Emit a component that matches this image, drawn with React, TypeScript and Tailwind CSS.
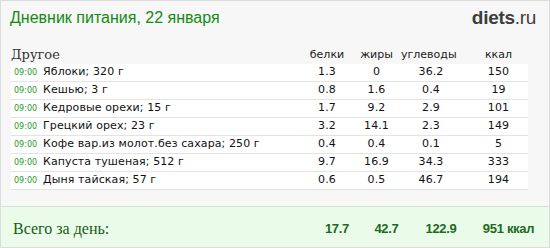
const rows = [
  { time: '09:00', name: 'Яблоки; 320 г', p: '1.3', f: '0', c: '36.2', k: '150' },
  { time: '09:00', name: 'Кешью; 3 г', p: '0.8', f: '1.6', c: '0.4', k: '19' },
  { time: '09:00', name: 'Кедровые орехи; 15 г', p: '1.7', f: '9.2', c: '2.9', k: '101' },
  { time: '09:00', name: 'Грецкий орех; 23 г', p: '3.2', f: '14.1', c: '2.3', k: '149' },
  { time: '09:00', name: 'Кофе вар.из молот.без сахара; 250 г', p: '0.4', f: '0.4', c: '0.1', k: '5' },
  { time: '09:00', name: 'Капуста тушеная; 512 г', p: '9.7', f: '16.9', c: '34.3', k: '333' },
  { time: '09:00', name: 'Дыня тайская; 57 г', p: '0.6', f: '0.5', c: '46.7', k: '194' },
];

const cols = 'grid grid-cols-[1fr_50px_49px_60px_67px]';

export default function App() {
  return (
    <div className="w-[550px] h-[248px] bg-[#f7f7f7] border border-[#dcdcdc] flex flex-col overflow-hidden">
      {/* Header */}
      <div className="flex items-start justify-between px-[9px] pt-[7px] h-[44px]">
        <h1 className="text-[16px] leading-[20px] text-[#128a12] font-['Liberation_Sans',Arial,sans-serif]">
          Дневник питания, 22 января
        </h1>
        <div className="text-[19px] leading-[20px] text-[#3d3d3d] font-['Liberation_Sans',Arial,sans-serif] pr-[4px] tracking-[-0.3px]">
          <span className="font-bold">diets</span>
          <span>.ru</span>
        </div>
      </div>

      {/* Table */}
      <div className="px-[10px] w-[537px]">
        <div className={`${cols} h-[19px] items-center text-[11px] text-[#222] font-['DejaVu_Sans',Verdana,sans-serif]`}>
          <div className="font-['DejaVu_Serif',serif] text-[13px] text-[#333]">Другое</div>
          <div className="text-center">белки</div>
          <div className="text-center">жиры</div>
          <div className="text-center pr-[6px]">углеводы</div>
          <div className="text-center pl-[8px]">ккал</div>
        </div>
        <div className="bg-white">
          {rows.map((r, i) => (
            <div
              key={i}
              className={`${cols} h-[18px] items-center border-b border-[#e3e3e3] text-[11px] text-[#111] font-['DejaVu_Sans',Verdana,sans-serif] tracking-[0.1px]`}
            >
              <div className="flex items-center pl-[3px] whitespace-nowrap">
                <span className="text-[8px] text-[#1f9a1f] w-[29px] tracking-normal">{r.time}</span>
                <span>{r.name}</span>
              </div>
              <div className="text-center">{r.p}</div>
              <div className="text-center">{r.f}</div>
              <div className="text-center">{r.c}</div>
              <div className="text-center pl-[8px]">{r.k}</div>
            </div>
          ))}
        </div>
      </div>

      <div className="h-[16px]" />

      {/* Totals */}
      <div className="flex-1 bg-[#eafce9] border-t border-[#dcdcdc] px-[10px]">
        <div className={`${cols} w-[527px] h-full items-center pt-[3px]`}>
          <div className="pl-[2px] text-[16px] text-[#145c14] font-['Liberation_Serif','Times_New_Roman',serif]">
            Всего за день:
          </div>
          <div className="text-center text-[13px] font-bold text-[#1d6a1d] font-['Liberation_Sans',Arial,sans-serif] tracking-[-0.3px]">17.7</div>
          <div className="text-center text-[13px] font-bold text-[#1d6a1d] font-['Liberation_Sans',Arial,sans-serif] tracking-[-0.3px]">42.7</div>
          <div className="text-center text-[13px] font-bold text-[#1d6a1d] font-['Liberation_Sans',Arial,sans-serif] tracking-[-0.3px]">122.9</div>
          <div className="text-center pl-[8px] text-[13px] font-bold text-[#1d6a1d] font-['Liberation_Sans',Arial,sans-serif] tracking-[-0.3px] whitespace-nowrap">951 ккал</div>
        </div>
      </div>
    </div>
  );
}
